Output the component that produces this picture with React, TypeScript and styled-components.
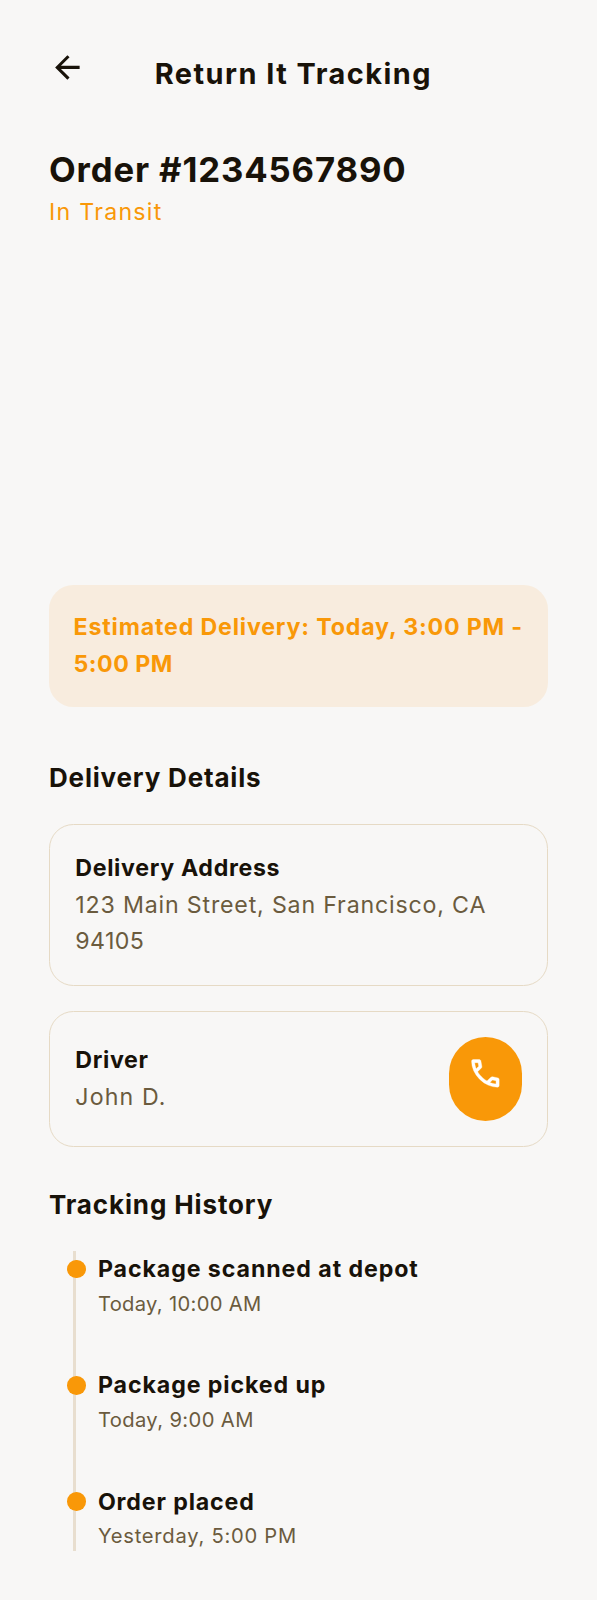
import React from "react";
import styled, { createGlobalStyle } from "styled-components";

const colors = {
  page: "#f8f7f6",
  ink: "#181209",
  muted: "#6b5b3e",
  accent: "#f99808",
  accentSoft: "#f8ecde",
  line: "#e8decf",
  border: "#e6dac5",
};

const GlobalStyle = createGlobalStyle`
  * { box-sizing: border-box; }
  body {
    margin: 0;
    background: ${colors.page};
    color: ${colors.ink};
    font-family: Inter, "Liberation Sans", sans-serif;
    font-kerning: normal;
  }
  h1, h2, h3, p, ul { margin: 0; padding: 0; }
`;

interface Tracked {
  $spacing: number;
}

const Page = styled.main`
  display: flex;
  flex-direction: column;
  width: 597px;
  min-height: 1600px;
  padding: 49px 49px 0;
  background: ${colors.page};
`;

const Header = styled.header`
  display: flex;
  align-items: flex-start;
  height: 97px;
`;

const IconButton = styled.button`
  display: flex;
  padding: 0;
  border: 0;
  background: none;
  color: ${colors.ink};
`;

const Title = styled.h1<Tracked>`
  flex: 1;
  padding: 6px 47px 0 0;
  text-align: center;
  font-size: 28.9px;
  font-weight: 700;
  line-height: 38px;
  letter-spacing: ${(p) => p.$spacing}px;
  white-space: nowrap;
`;

const OrderNumber = styled.h2<Tracked>`
  font-size: 34.7px;
  font-weight: 700;
  line-height: 47px;
  letter-spacing: ${(p) => p.$spacing}px;
`;

const Status = styled.p<Tracked>`
  font-size: 23.2px;
  line-height: 38px;
  color: ${colors.accent};
  letter-spacing: ${(p) => p.$spacing}px;
`;

const MapArea = styled.div`
  height: 306px;
  margin: 24px 0;
`;

const Estimate = styled.section`
  height: 122px;
  padding: 24px 24.5px;
  border-radius: 24.5px;
  background: ${colors.accentSoft};
  color: ${colors.accent};
`;

const EstimateLine = styled.p<Tracked>`
  font-size: 23.2px;
  font-weight: 700;
  line-height: 36.75px;
  letter-spacing: ${(p) => p.$spacing}px;
  white-space: nowrap;
`;

const SectionTitle = styled.h2<Tracked & { $top: number; $bottom: number }>`
  margin: ${(p) => p.$top}px 0 ${(p) => p.$bottom}px;
  font-size: 26px;
  font-weight: 700;
  line-height: 35px;
  letter-spacing: ${(p) => p.$spacing}px;
`;

const Cards = styled.div`
  display: flex;
  flex-direction: column;
  gap: 25px;
`;

const Card = styled.section<{ $height: number }>`
  display: flex;
  align-items: center;
  justify-content: space-between;
  height: ${(p) => p.$height}px;
  padding: 0 25px 0 25.3px;
  border: 1px solid ${colors.border};
  border-radius: 24.5px;
`;

const CardTitle = styled.h3<Tracked>`
  font-size: 23.2px;
  font-weight: 700;
  line-height: 36.75px;
  letter-spacing: ${(p) => p.$spacing}px;
`;

const CardText = styled.p<Tracked>`
  font-size: 23.2px;
  font-weight: 400;
  line-height: 36.75px;
  color: ${colors.muted};
  letter-spacing: ${(p) => p.$spacing}px;
  white-space: nowrap;
`;

const CallButton = styled.button`
  display: flex;
  align-items: flex-start;
  width: 73.5px;
  height: 84.5px;
  padding: 18.4px;
  border: 0;
  border-radius: 36.75px;
  background: ${colors.accent};
  color: #fff;
`;

const Timeline = styled.ul`
  display: flex;
  flex-direction: column;
  gap: 47.8px;
  height: 300px;
  margin-left: 24.4px;
  padding-left: 21.5px;
  border-left: 3px solid ${colors.line};
  list-style: none;
`;

const Event = styled.li`
  position: relative;
  padding-top: 1px;
  &::before {
    content: "";
    position: absolute;
    left: -30.6px;
    top: 8.7px;
    width: 18.6px;
    height: 18.6px;
    border-radius: 50%;
    background: ${colors.accent};
  }
`;

const EventTitle = styled.h3<Tracked>`
  font-size: 23.2px;
  font-weight: 700;
  line-height: 35.5px;
  letter-spacing: ${(p) => p.$spacing}px;
`;

const EventTime = styled.p<Tracked>`
  font-size: 20.2px;
  font-weight: 400;
  line-height: 32px;
  color: ${colors.muted};
  letter-spacing: ${(p) => p.$spacing}px;
`;

const ArrowBack = () => (
  <svg width="36.75" height="36.75" viewBox="0 0 24 24" fill="currentColor" aria-hidden="true">
    <path d="M7.825 13 13.425 18.6 12 20 4 12 12 4 13.425 5.4 7.825 11H20V13Z" />
  </svg>
);

const Phone = () => (
  <svg width="36.75" height="36.75" viewBox="0 -960 960 960" fill="currentColor" stroke="currentColor" strokeWidth="10" aria-hidden="true">
    <path d="M798-120q-125 0-247-54.5T329-329Q229-429 174.5-551T120-798q0-18 12-30t30-12h162q14 0 25 9.5t13 22.5l26 140q2 16-1 27t-11 19l-97 98q20 37 47.5 71.5T387-386q31 31 65 57.5t72 48.5l94-94q9-9 23.5-13.5T670-390l138 28q14 4 23 14.5t9 23.5v162q0 18-12 30t-30 12ZM241-600l66-66-17-94h-89q5 41 14 81t26 79Zm358 358q39 17 79.5 27t81.5 13v-88l-94-19-67 67Z" />
  </svg>
);

const events = [
  { title: "Package scanned at depot", titleSpacing: 0.91, time: "Today, 10:00 AM", timeSpacing: 0.31 },
  { title: "Package picked up", titleSpacing: 0.9, time: "Today, 9:00 AM", timeSpacing: 0.38 },
  { title: "Order placed", titleSpacing: 0.86, time: "Yesterday, 5:00 PM", timeSpacing: 0.74 },
];

export default function App() {
  return (
    <Page>
      <GlobalStyle />
      <Header>
        <IconButton aria-label="Back">
          <ArrowBack />
        </IconButton>
        <Title $spacing={1.48}>Return It Tracking</Title>
      </Header>
      <OrderNumber $spacing={0.86}>Order #1234567890</OrderNumber>
      <Status $spacing={1.26}>In Transit</Status>
      <MapArea />
      <Estimate>
        <EstimateLine $spacing={0.83}>Estimated Delivery: Today, 3:00 PM -</EstimateLine>
        <EstimateLine $spacing={0.5}>5:00 PM</EstimateLine>
      </Estimate>
      <SectionTitle $spacing={0.81} $top={53} $bottom={29}>
        Delivery Details
      </SectionTitle>
      <Cards>
        <Card $height={162}>
          <div>
            <CardTitle $spacing={0.66}>Delivery Address</CardTitle>
            <CardText $spacing={0.81}>123 Main Street, San Francisco, CA</CardText>
            <CardText $spacing={0.4}>94105</CardText>
          </div>
        </Card>
        <Card $height={136}>
          <div>
            <CardTitle $spacing={0.65}>Driver</CardTitle>
            <CardText $spacing={1.12}>John D.</CardText>
          </div>
          <CallButton aria-label="Call driver">
            <Phone />
          </CallButton>
        </Card>
      </Cards>
      <SectionTitle $spacing={0.87} $top={40} $bottom={29}>
        Tracking History
      </SectionTitle>
      <Timeline>
        {events.map((e) => (
          <Event key={e.title}>
            <EventTitle $spacing={e.titleSpacing}>{e.title}</EventTitle>
            <EventTime $spacing={e.timeSpacing}>{e.time}</EventTime>
          </Event>
        ))}
      </Timeline>
    </Page>
  );
}
